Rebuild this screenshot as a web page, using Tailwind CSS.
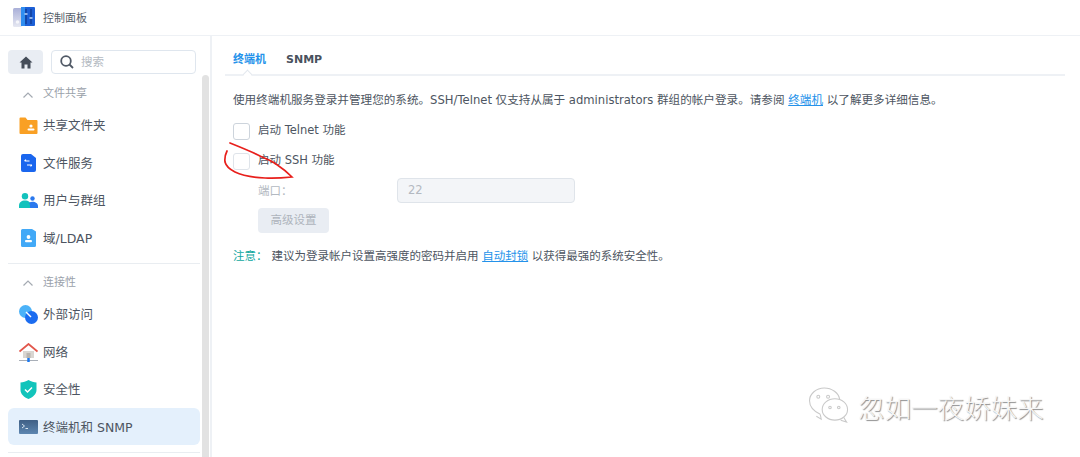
<!DOCTYPE html>
<html lang="zh-CN">
<head>
  <meta charset="UTF-8" />
  <title>控制面板</title>
  <script src="https://cdn.jsdelivr.net/npm/@tailwindcss/browser@4"></script>
</head>
<body class="bg-white text-[#4d5561] text-[11.500px] font-['DejaVu_Sans','Noto_Sans_CJK_SC',sans-serif]">
<div class="relative w-[1080px] h-[457px] overflow-hidden">

  <!-- Title bar -->
  <div class="h-[36px] border-b border-[#eef1f5] flex items-center pl-[13px] gap-[8px]">
    <svg width="22" height="21" viewBox="0 0 22 21">
      <defs><linearGradient id="lilac" x1="0" y1="0" x2="0" y2="1"><stop offset="0" stop-color="#a9afd8"/><stop offset="1" stop-color="#e6e8f2"/></linearGradient></defs>
      <rect x="0" y="1" width="9" height="19" rx="1.500" fill="url(#lilac)"/>
      <circle cx="4.500" cy="15" r="1.800" fill="#f4f5fa"/>
      <rect x="8" y="0" width="14" height="19" rx="1" fill="#1c5fd6"/>
      <rect x="8" y="0" width="4" height="19" fill="#2f8df0"/>
      <path d="M13 2v15M18 2v15" stroke="#0b2f7a" stroke-width="1"/>
      <path d="M11.500 7h3M16.500 11h3" stroke="#bcd8fa" stroke-width="1.400"/>
    </svg>
    <span class="text-[#555d69] text-[11px] pt-[3px]">控制面板</span>
  </div>

  <div class="flex h-[421px]">
    <!-- Sidebar -->
    <aside class="relative w-[212px] shrink-0 border-r-2 border-[#eef1f5] pl-2 pr-[11px] overflow-hidden">
      <div class="flex items-center gap-2 pt-[14px] w-[188px]">
        <div class="w-[35px] h-[24px] rounded bg-[#e9edf3] flex items-center justify-center">
          <svg width="14" height="13" viewBox="0 0 14 13"><path d="M7 0.500 0.500 6.500H2.500V12.500H5.500V8.500H8.500V12.500H11.500V6.500H13.500Z" fill="#454d59"/></svg>
        </div>
        <div class="w-[145px] h-[24px] rounded border border-[#dfe6ee] flex items-center pl-[8px] gap-[7px]">
          <svg width="14" height="14" viewBox="0 0 14 14" fill="none" stroke="#505966" stroke-width="1.800"><circle cx="6" cy="6" r="4.800"/><path d="M9.500 9.500 13 13"/></svg>
          <span class="text-[#b4bac2] pt-[2px]">搜索</span>
        </div>
      </div>

      <div class="h-[32px] pt-[9px] flex items-center pl-[15px] gap-[10px] text-[#9aa1aa] text-[11px] w-[192px]">
        <svg width="10" height="6" viewBox="0 0 10 6" fill="none" stroke="#a4aab2" stroke-width="1.200"><path d="M0.500 5.500 5 1l4.500 4.500"/></svg>
        <span>文件共享</span>
      </div>

      <div class="w-[192px] text-[12.500px]">
        <div class="h-[37.5px] pt-[2px] flex items-center pl-[11px] gap-[5px]">
          <svg width="19" height="17" viewBox="0 0 19 17"><path d="M0.500 1.500a1 1 0 0 1 1-1h5l2 2.500h9a1 1 0 0 1 1 1V16a1 1 0 0 1-1 1h-16a1 1 0 0 1-1-1Z" fill="#f9a024"/><circle cx="12" cy="9" r="1.600" fill="#fff"/><rect x="8.500" y="11.500" width="7" height="2" rx="1" fill="#fff"/></svg>
          <span class="pt-[2px]">共享文件夹</span>
        </div>
        <div class="h-[37.5px] pt-[2px] flex items-center pl-[12px] gap-[6px]">
          <svg width="17" height="18" viewBox="0 0 17 18"><path d="M1 2a2 2 0 0 1 2-2h8l5 4v12a2 2 0 0 1-2 2H3a2 2 0 0 1-2-2Z" fill="#1a66ee"/><path d="M4.500 7h5M4.500 7l1.500-1.300M12 11H7m5 0-1.500 1.300" stroke="#fff" stroke-width="1.100" fill="none"/></svg>
          <span class="pt-[2px]">文件服务</span>
        </div>
        <div class="h-[37.5px] pt-[2px] flex items-center pl-[11px] gap-[5px]">
          <svg width="19" height="15" viewBox="0 0 19 15"><circle cx="6" cy="3.200" r="3.200" fill="#12c2bc"/><path d="M0 15v-2.500C0 9.500 2.500 7.500 6 7.500s6 2 6 5V15Z" fill="#12c2bc"/><circle cx="13.500" cy="5.500" r="2.200" fill="#2a78ee"/><path d="M11 15v-2c0-1.500-.4-2.300-1-3 1-.8 2.200-1.200 3.500-1.200 3 0 5.500 1.800 5.500 4.200v2Z" fill="#2a78ee"/></svg>
          <span class="pt-[2px]">用户与群组</span>
        </div>
        <div class="h-[37.5px] pt-[2px] flex items-center pl-[12px] gap-[6px]">
          <svg width="17" height="18" viewBox="0 0 17 18"><path d="M1 1.500A1.500 1.500 0 0 1 2.500 0H12l4 2.500V16.500a1.500 1.500 0 0 1-1.500 1.500h-12A1.500 1.500 0 0 1 1 16.500Z" fill="#42a9f7"/><circle cx="8.500" cy="8" r="1.900" fill="#fff"/><rect x="5" y="11" width="7" height="2.200" rx="1" fill="#fff"/></svg>
          <span class="pt-[2px]">域/LDAP</span>
        </div>
      </div>

      <div class="w-[192px] h-px bg-[#e9edf1] mt-[7px]"></div>
      <div class="h-[31px] pt-[7px] flex items-center pl-[15px] gap-[10px] text-[#9aa1aa] text-[11px] w-[192px]">
        <svg width="10" height="6" viewBox="0 0 10 6" fill="none" stroke="#a4aab2" stroke-width="1.200"><path d="M0.500 5.500 5 1l4.500 4.500"/></svg>
        <span>连接性</span>
      </div>

      <div class="w-[192px] text-[12.500px]">
        <div class="h-[37.5px] pt-[2px] flex items-center pl-[11px] gap-[5px]">
          <svg width="19" height="19" viewBox="0 0 19 19"><circle cx="6.500" cy="6.500" r="6.500" fill="#4bb2f8"/><circle cx="12.500" cy="12.500" r="6.500" fill="#1b6cf0"/><path d="M7 7l5 5" stroke="#fff" stroke-width="1.400"/></svg>
          <span class="pt-[2px]">外部访问</span>
        </div>
        <div class="h-[37.5px] pt-[2px] flex items-center pl-[11px] gap-[5px]">
          <svg width="19" height="19" viewBox="0 0 19 19"><path d="M4 8h11v7H4Z" fill="#d9d6d2"/><path d="M0.500 8.500 9.500 1l9 7.500" fill="none" stroke="#e2574c" stroke-width="1.800"/><rect x="7.500" y="10" width="4" height="5" fill="#b9b5b0"/><path d="M0 17.500h19" stroke="#a9afb8"/><path d="M9.500 15v4" stroke="#1b78f0" stroke-width="2.500"/></svg>
          <span class="pt-[2px]">网络</span>
        </div>
        <div class="h-[37.5px] pt-[2px] flex items-center pl-[12px] gap-[6px]">
          <svg width="17" height="19" viewBox="0 0 17 19"><path d="M8.500 0C6 1.500 3 2.300 0.500 2.500V10c0 4 3.500 7.300 8 9 4.500-1.700 8-5 8-9V2.500C14 2.300 11 1.500 8.500 0Z" fill="#12c4bb"/><path d="M5 9.500l2.500 2.500L12 7.500" fill="none" stroke="#fff" stroke-width="1.500"/></svg>
          <span class="pt-[2px]">安全性</span>
        </div>
        <div class="h-[37.5px] pt-[2px] flex items-center pl-[11px] gap-[5px] bg-[#e4f0fc] rounded-md">
          <svg width="19" height="14" viewBox="0 0 19 14"><defs><linearGradient id="term" x1="0" y1="0" x2="0" y2="1"><stop offset="0" stop-color="#3f5f85"/><stop offset="1" stop-color="#5d86b0"/></linearGradient></defs><rect width="19" height="14" rx="1" fill="url(#term)"/><path d="M3 4l2.500 2L3 8M6.500 8.500H9" fill="none" stroke="#e8f0f8" stroke-width="0.900"/></svg>
          <span class="pt-[2px]">终端机和 SNMP</span>
        </div>
      </div>
      <div class="w-[192px] h-px bg-[#e9edf1] mt-[7px]"></div>

      <!-- Scrollbar -->
      <div class="absolute left-[202px] top-[39px] bottom-0 w-[7px] bg-[#e2e2e2] rounded-t-full"></div>
    </aside>

    <!-- Main content -->
    <main class="flex-1 pl-[21px]">
      <div class="relative w-[840px] -ml-[8px] h-[40px] border-b-2 border-[#eef1f5] flex items-center gap-[20px] pl-[8px] pt-[10px] font-semibold text-[11px] whitespace-nowrap">
        <span class="text-[#2492ea]">终端机</span>
        <span class="text-[#49515d]">SNMP</span>
        <span class="absolute left-[19px] bottom-[-4px] w-[7px] h-[7px] rotate-45 bg-white border-l border-t border-[#e3e8ee]"></span>
      </div>

      <p class="mt-[15px] text-[11.600px] leading-[18px] whitespace-nowrap">使用终端机服务登录并管理您的系统。SSH/Telnet 仅支持从属于 administrators 群组的帐户登录。请参阅 <a class="text-[#2492ea] underline">终端机</a> 以了解更多详细信息。</p>

      <div class="mt-[13px] flex items-center gap-[8px] h-[18px]">
        <span class="w-[17px] h-[17px] rounded-[3px] border border-[#cdd4dc] bg-white"></span>
        <span>启动 Telnet 功能</span>
      </div>
      <div class="mt-[12px] flex items-center gap-[8px] h-[18px]">
        <span class="w-[17px] h-[17px] rounded-[3px] border border-[#dfe4ea] bg-white"></span>
        <span>启动 SSH 功能</span>
      </div>

      <div class="mt-[8px] flex items-center pl-[25px]">
        <span class="w-[139px] pt-[3px] text-[#b3b9c1]">端口：</span>
        <div class="w-[178px] h-[25px] rounded border border-[#dfe4ea] bg-[#f3f5f8] flex items-center pl-[10px] text-[#b3b9c1]">22</div>
      </div>
      <div class="mt-[5px] ml-[25px] w-[71px] h-[25px] rounded bg-[#e9edf3] flex items-center justify-center text-[#aeb4bc]">高级设置</div>

      <p class="mt-[14px] leading-[18px] whitespace-nowrap"><span class="text-[#12a89f] mr-[4px]">注意：</span>建议为登录帐户设置高强度的密码并启用 <a class="text-[#2492ea] underline">自动封锁</a> 以获得最强的系统安全性。</p>
    </main>
  </div>

  <!-- Red hand-drawn annotation -->
  <svg class="absolute left-0 top-0 pointer-events-none" width="320" height="200" viewBox="0 0 320 200" fill="none">
    <path d="M230 143C240 147 250 151 258 155 266 159 272 161 276 164 282 168 288 173 292 177 282 178 274 178.500 265 178 254 177.500 243 176 235 172 229 169 226 166 225 162 224.500 158 225.500 154 227 151" stroke="#e8201c" stroke-width="1.700" stroke-linecap="round"/>
  </svg>

  <!-- Watermark -->
  <div class="absolute left-[808px] top-[387px] flex items-center gap-[6px]">
    <svg width="44" height="39" viewBox="0 0 44 40" fill="none" stroke="#c9c9c9" stroke-width="1.100">
      <path d="M12 28C6 25 1 20 1 14 1 7 8 1 16 1s15 5 16 12"/>
      <path d="M12 28l1 5-5-3"/>
      <ellipse cx="27" cy="23" rx="13" ry="11" fill="#fff"/>
      <path d="M36 31l3 5-6-2"/>
      <circle cx="10" cy="10" r="1.500"/><circle cx="20" cy="10" r="1.500"/>
      <circle cx="22" cy="21" r="1.300"/><circle cx="31" cy="21" r="1.300"/>
    </svg>
    <span class="text-[26.500px] font-light text-[#f6f6f6] whitespace-nowrap [text-shadow:1px_1px_1px_#8a8a8a] font-['Noto_Sans_CJK_SC',sans-serif]">忽如一夜娇妹来</span>
  </div>
</div>
</body>
</html>
